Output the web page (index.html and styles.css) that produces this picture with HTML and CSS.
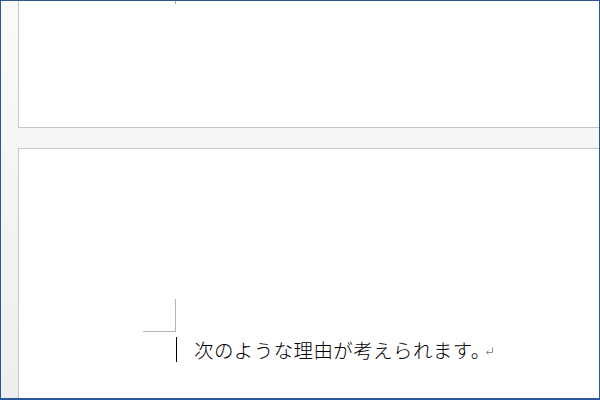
FILE: index.html
```html
<!DOCTYPE html>
<html lang="ja">
<head>
<meta charset="utf-8">
<link rel="stylesheet" href="styles.css">
</head>
<body>
<div class="frame">
  <div class="page page-first">
    <div class="mark-top"></div>
  </div>
  <div class="page page-second">
    <div class="crop"></div>
    <div class="line">
      <span class="cursor"></span>
      <span class="text">次のような理由が考えられます。</span>
      <svg class="ret" width="9" height="8" viewBox="0 0 9 8"><path d="M7.5 0.5V5.5H1.5M1.5 5.5L3.5 3.5M1.5 5.5L3.5 7.5" fill="none" stroke="#8c8c8c" stroke-width="1"/></svg>
    </div>
  </div>
</div>
</body>
</html>
```
FILE: styles.css
```css
html, body {
  margin: 0;
  padding: 0;
}
.frame {
  width: 600px;
  height: 400px;
  box-sizing: border-box;
  border: 1px solid #2b579a;
  border-bottom-width: 2px;
  background: linear-gradient(#fafafa, #eeeeee);
  display: flex;
  flex-direction: column;
  overflow: hidden;
}
.page {
  margin-left: 17px;
  background: #ffffff;
  border-left: 1px solid #c6c6c6;
}
.page-first {
  height: 126px;
  flex: none;
  border-bottom: 1px solid #c6c6c6;
}
.mark-top {
  margin-left: 156px;
  width: 1px;
  height: 3px;
  background: #a6a6a6;
}
.page-second {
  margin-top: 20px;
  flex: 1;
  border-top: 1px solid #c6c6c6;
  display: flex;
  flex-direction: column;
}
.crop {
  margin-left: 124px;
  margin-top: 150px;
  width: 33px;
  height: 33px;
  box-sizing: border-box;
  border-right: 1px solid #b4b4b4;
  border-bottom: 1px solid #b4b4b4;
}
.line {
  margin-top: 5px;
  margin-left: 157px;
  display: flex;
  align-items: center;
  height: 25px;
}
.cursor {
  width: 1px;
  height: 25px;
  background: #000;
}
.text {
  margin-left: 17px;
  font-family: "Noto Sans CJK JP", sans-serif;
  font-size: 19.5px;
  font-weight: 300;
  letter-spacing: 0.4px;
  line-height: 25px;
  color: #000;
}
.ret {
  margin-left: -6px;
  margin-top: 3px;
}
```
